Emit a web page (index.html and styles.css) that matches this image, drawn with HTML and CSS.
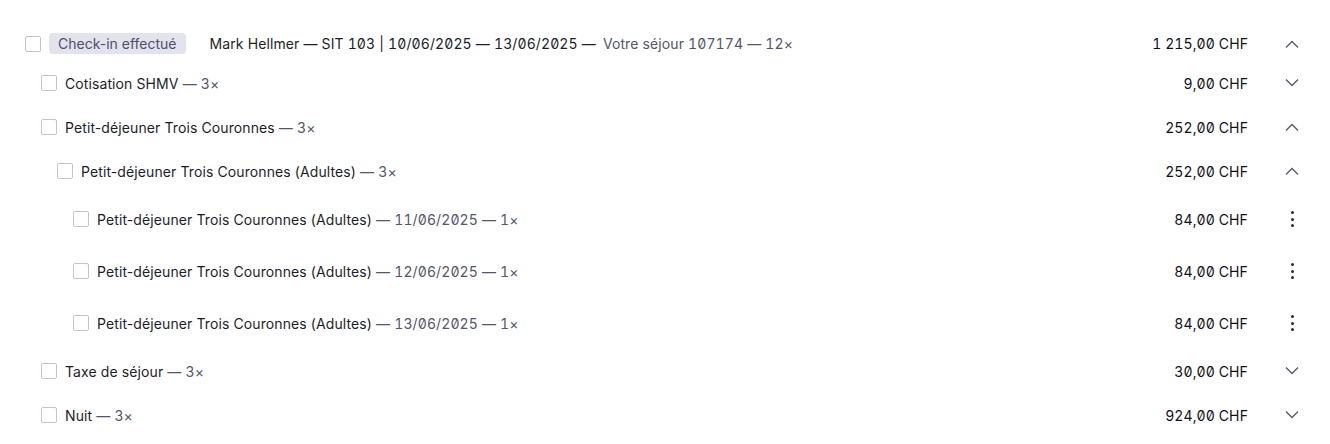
FILE: index.html
```html
<!DOCTYPE html>
<html lang="fr">
<head>
  <meta charset="UTF-8">
  <meta name="viewport" content="width=device-width, initial-scale=1.0">
  <title>Séjour 107174</title>
  <link rel="stylesheet" href="styles.css">
</head>
<body>

  <!-- Booking tree -->
  <div class="booking-list">

    <!-- Stay header -->
    <div class="row row-header">
      <span class="check"></span>
      <span class="badge">Check-in effectué</span>
      <span class="label header-label">
        <span class="main">Mark Hellmer — SIT <span class="num">103</span> | <span class="num">10/06/2025</span> — <span class="num">13/06/2025</span> —</span>
        <span class="muted">Votre séjour <span class="num">107174</span> — <span class="num">12</span>×</span>
      </span>
      <span class="amount">1 215,00 CHF</span>
      <button class="action"><svg width="14" height="8" viewBox="0 0 14 8"><path d="M1 7.5 L7 1.5 L13 7.5" /></svg></button>
    </div>

    <div class="row lvl-1">
      <span class="check"></span>
      <span class="label">Cotisation SHMV <span class="muted">— <span class="num">3</span>×</span></span>
      <span class="amount">9,00 CHF</span>
      <button class="action"><svg width="14" height="8" viewBox="0 0 14 8"><path d="M1 0.5 L7 6.5 L13 0.5" /></svg></button>
    </div>

    <div class="row lvl-1">
      <span class="check"></span>
      <span class="label">Petit-déjeuner Trois Couronnes <span class="muted">— <span class="num">3</span>×</span></span>
      <span class="amount">252,00 CHF</span>
      <button class="action"><svg width="14" height="8" viewBox="0 0 14 8"><path d="M1 7.5 L7 1.5 L13 7.5" /></svg></button>
    </div>

    <div class="row lvl-2">
      <span class="check"></span>
      <span class="label">Petit-déjeuner Trois Couronnes (Adultes) <span class="muted">— <span class="num">3</span>×</span></span>
      <span class="amount">252,00 CHF</span>
      <button class="action"><svg width="14" height="8" viewBox="0 0 14 8"><path d="M1 7.5 L7 1.5 L13 7.5" /></svg></button>
    </div>

    <div class="row lvl-3 leaf">
      <span class="check"></span>
      <span class="label">Petit-déjeuner Trois Couronnes (Adultes) <span class="muted">— <span class="num">11/06/2025</span> — <span class="num">1</span>×</span></span>
      <span class="amount">84,00 CHF</span>
      <button class="action kebab"><span></span><span></span><span></span></button>
    </div>

    <div class="row lvl-3 leaf">
      <span class="check"></span>
      <span class="label">Petit-déjeuner Trois Couronnes (Adultes) <span class="muted">— <span class="num">12/06/2025</span> — <span class="num">1</span>×</span></span>
      <span class="amount">84,00 CHF</span>
      <button class="action kebab"><span></span><span></span><span></span></button>
    </div>

    <div class="row lvl-3 leaf">
      <span class="check"></span>
      <span class="label">Petit-déjeuner Trois Couronnes (Adultes) <span class="muted">— <span class="num">13/06/2025</span> — <span class="num">1</span>×</span></span>
      <span class="amount">84,00 CHF</span>
      <button class="action kebab"><span></span><span></span><span></span></button>
    </div>

    <div class="row lvl-1">
      <span class="check"></span>
      <span class="label">Taxe de séjour <span class="muted">— <span class="num">3</span>×</span></span>
      <span class="amount">30,00 CHF</span>
      <button class="action"><svg width="14" height="8" viewBox="0 0 14 8"><path d="M1 0.5 L7 6.5 L13 0.5" /></svg></button>
    </div>

    <div class="row lvl-1">
      <span class="check"></span>
      <span class="label">Nuit <span class="muted">— <span class="num">3</span>×</span></span>
      <span class="amount">924,00 CHF</span>
      <button class="action"><svg width="14" height="8" viewBox="0 0 14 8"><path d="M1 0.5 L7 6.5 L13 0.5" /></svg></button>
    </div>

  </div>

</body>
</html>
```

FILE: styles.css
```css
/* General styling */
body {
  margin: 0;
  background-color: #fff;
  font-family: Inter, "Noto Sans", sans-serif;
  font-size: 14px;
  letter-spacing: 0.1px;
  color: #1d1d2b;
}

/* List container */
.booking-list {
  padding: 26px 22px 0 25px;
}

/* Rows */
.row {
  display: flex;
  align-items: center;
  height: 44px;
}

.row-header {
  height: 35px;
}

.row.leaf {
  height: 52px;
}

.lvl-1 { padding-left: 16px; }
.lvl-2 { padding-left: 32px; }
.lvl-3 { padding-left: 48px; }

/* Checkbox */
.check {
  flex: none;
  width: 14px;
  height: 14px;
  border: 1px solid #c3c1d5;
  border-radius: 2px;
  background: #fff;
  margin-right: 8px;
}

/* Status badge */
.badge {
  flex: none;
  height: 21px;
  line-height: 21px;
  padding: 0 9px;
  margin-right: 24px;
  border-radius: 4px;
  background-color: #e3e3ee;
  color: #4f4f68;
  letter-spacing: 0;
}

/* Labels */
.label {
  flex: 1;
  white-space: nowrap;
}

.header-label .muted {
  margin-left: 3px;
}

.muted {
  color: #55556b;
}

.num {
  font-feature-settings: "tnum", "zero";
}

/* Amount */
.amount {
  flex: none;
  color: #111119;
  font-feature-settings: "tnum", "zero";
  text-align: right;
}

/* Chevron / menu button */
.action {
  flex: none;
  width: 32px;
  height: 32px;
  margin-left: 28px;
  padding: 0;
  border: none;
  background: none;
  display: flex;
  align-items: center;
  justify-content: center;
  cursor: pointer;
}

.action svg path {
  fill: none;
  stroke: #5a5a72;
  stroke-width: 1.4;
}

.kebab {
  flex-direction: column;
  gap: 3.5px;
}

.kebab span {
  width: 3px;
  height: 3px;
  border-radius: 50%;
  background: #2a2a36;
}
```
